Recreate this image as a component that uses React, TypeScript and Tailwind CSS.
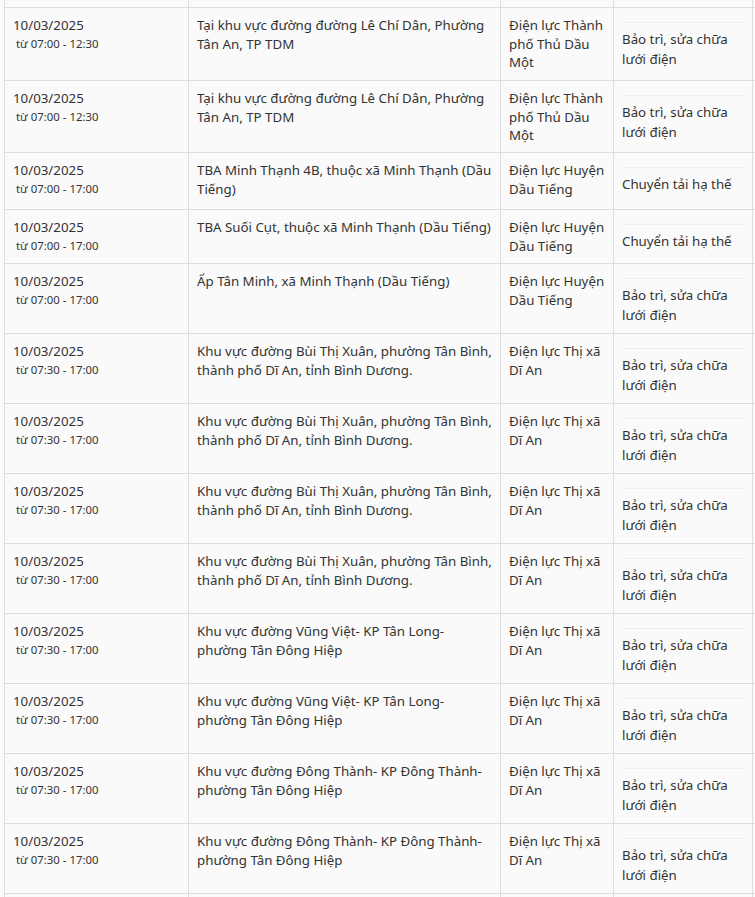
import React from 'react';

type OutageRow = {
  date: string;
  time: string;
  area: string[];
  unit: string[];
  reason: string[];
  height: string;
};

const MAINT = ['Bảo trì, sửa chữa', 'lưới điện'];
const TRANSFER = ['Chuyển tải hạ thế'];
const TDM = ['Điện lực Thành', 'phố Thủ Dầu', 'Một'];
const DAU_TIENG = ['Điện lực Huyện', 'Dầu Tiếng'];
const DI_AN = ['Điện lực Thị xã', 'Dĩ An'];

const LE_CHI_DAN = ['Tại khu vực đường đường Lê Chí Dân, Phường', 'Tân An, TP TDM'];
const BUI_THI_XUAN = ['Khu vực đường Bùi Thị Xuân, phường Tân Bình,', 'thành phố Dĩ An, tỉnh Bình Dương.'];
const VUNG_VIET = ['Khu vực đường Vũng Việt- KP Tân Long-', 'phường Tân Đông Hiệp'];
const DONG_THANH = ['Khu vực đường Đông Thành- KP Đông Thành-', 'phường Tân Đông Hiệp'];

const rows: OutageRow[] = [
  { date: '10/03/2025', time: 'từ 07:00 - 12:30', area: LE_CHI_DAN, unit: TDM, reason: MAINT, height: 'h-[73px]' },
  { date: '10/03/2025', time: 'từ 07:00 - 12:30', area: LE_CHI_DAN, unit: TDM, reason: MAINT, height: 'h-[72px]' },
  { date: '10/03/2025', time: 'từ 07:00 - 17:00', area: ['TBA Minh Thạnh 4B, thuộc xã Minh Thạnh (Dầu', 'Tiếng)'], unit: DAU_TIENG, reason: TRANSFER, height: 'h-[57px]' },
  { date: '10/03/2025', time: 'từ 07:00 - 17:00', area: ['TBA Suối Cụt, thuộc xã Minh Thạnh (Dầu Tiếng)'], unit: DAU_TIENG, reason: TRANSFER, height: 'h-[54px]' },
  { date: '10/03/2025', time: 'từ 07:00 - 17:00', area: ['Ấp Tân Minh, xã Minh Thạnh (Dầu Tiếng)'], unit: DAU_TIENG, reason: MAINT, height: 'h-[70px]' },
  { date: '10/03/2025', time: 'từ 07:30 - 17:00', area: BUI_THI_XUAN, unit: DI_AN, reason: MAINT, height: 'h-[70px]' },
  { date: '10/03/2025', time: 'từ 07:30 - 17:00', area: BUI_THI_XUAN, unit: DI_AN, reason: MAINT, height: 'h-[70px]' },
  { date: '10/03/2025', time: 'từ 07:30 - 17:00', area: BUI_THI_XUAN, unit: DI_AN, reason: MAINT, height: 'h-[70px]' },
  { date: '10/03/2025', time: 'từ 07:30 - 17:00', area: BUI_THI_XUAN, unit: DI_AN, reason: MAINT, height: 'h-[70px]' },
  { date: '10/03/2025', time: 'từ 07:30 - 17:00', area: VUNG_VIET, unit: DI_AN, reason: MAINT, height: 'h-[70px]' },
  { date: '10/03/2025', time: 'từ 07:30 - 17:00', area: VUNG_VIET, unit: DI_AN, reason: MAINT, height: 'h-[70px]' },
  { date: '10/03/2025', time: 'từ 07:30 - 17:00', area: DONG_THANH, unit: DI_AN, reason: MAINT, height: 'h-[70px]' },
  { date: '10/03/2025', time: 'từ 07:30 - 17:00', area: DONG_THANH, unit: DI_AN, reason: MAINT, height: 'h-[70px]' },
];

const Lines = ({ lines }: { lines: string[] }) => (
  <>
    {lines.map((l, i) => (
      <div key={i} className="whitespace-nowrap">{l}</div>
    ))}
  </>
);

// empty cells for the rows cut by the top / bottom edge
const EmptyCells = () => (
  <>
    <div className="w-[184px] shrink-0 border-l border-[#dddddd]" />
    <div className="w-[312px] shrink-0 border-l border-[#dddddd]" />
    <div className="w-[113px] shrink-0 border-l border-[#dddddd]" />
    <div className="w-[140px] shrink-0 border-l border-r border-[#dddddd]" />
  </>
);

const Row = ({ row }: { row: OutageRow }) => (
  <div className={`flex border-t border-[#dddddd] ${row.height}`}>
    {/* Ngày / giờ */}
    <div className="w-[184px] shrink-0 border-l border-[#dddddd] px-2 pt-2 leading-[18.67px]">
      <div className="text-[13.3px]">{row.date}</div>
      <div className="text-[11.4px] pl-[3px]">{row.time}</div>
    </div>
    {/* Khu vực */}
    <div className="w-[312px] shrink-0 border-l border-[#dddddd] px-2 pt-2 text-[13.3px] leading-[18.67px]">
      <Lines lines={row.area} />
    </div>
    {/* Đơn vị */}
    <div className="w-[113px] shrink-0 border-l border-[#dddddd] px-2 pt-2 text-[13.3px] leading-[18.67px]">
      <Lines lines={row.unit} />
    </div>
    {/* Lý do */}
    <div className="w-[140px] shrink-0 border-l border-r border-[#dddddd] px-2 pt-[14px]">
      <div className="border-t border-[#eeeeee] pt-[6px] text-[13.3px] leading-[20px]">
        <Lines lines={row.reason} />
      </div>
    </div>
  </div>
);

export default function App() {
  return (
    <div className="w-[755px] h-[897px] overflow-hidden bg-[#fafafa] pl-[4px] text-[#333333] font-['Noto_Sans',sans-serif]">
      <div className="flex h-[7px]">
        <EmptyCells />
      </div>
      {rows.map((r, i) => (
        <Row key={i} row={r} />
      ))}
      <div className="flex h-[20px] border-t border-[#dddddd]">
        <EmptyCells />
      </div>
    </div>
  );
}
